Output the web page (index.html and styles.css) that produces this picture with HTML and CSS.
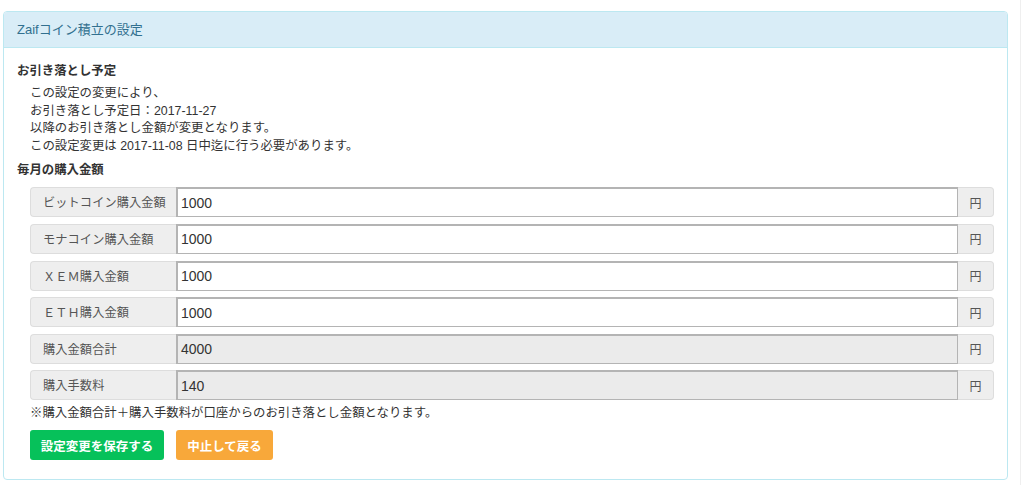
FILE: index.html
```html
<!DOCTYPE html>
<html lang="ja">
<head>
<meta charset="utf-8">
<title>Zaifコイン積立の設定</title>
<link rel="stylesheet" href="styles.css">
</head>
<body>
<div class="panel">
  <div class="panel-heading">Zaifコイン積立の設定</div>
  <div class="panel-body">
    <div class="sec-title">お引き落とし予定</div>
    <div class="notice">
      <div>この設定の変更により、</div>
      <div>お引き落とし予定日：2017-11-27</div>
      <div>以降のお引き落とし金額が変更となります。</div>
      <div>この設定変更は 2017-11-08 日中迄に行う必要があります。</div>
    </div>
    <div class="sec-title sec-title2">毎月の購入金額</div>
    <div class="form-area">
      <div class="rows">
        <div class="igroup"><div class="ilabel">ビットコイン購入金額</div><div class="iinput">1000</div><div class="iaddon">円</div></div>
        <div class="igroup"><div class="ilabel">モナコイン購入金額</div><div class="iinput">1000</div><div class="iaddon">円</div></div>
        <div class="igroup"><div class="ilabel">ＸＥＭ購入金額</div><div class="iinput">1000</div><div class="iaddon">円</div></div>
        <div class="igroup"><div class="ilabel">ＥＴＨ購入金額</div><div class="iinput">1000</div><div class="iaddon">円</div></div>
        <div class="igroup"><div class="ilabel">購入金額合計</div><div class="iinput disabled">4000</div><div class="iaddon">円</div></div>
        <div class="igroup"><div class="ilabel">購入手数料</div><div class="iinput disabled">140</div><div class="iaddon">円</div></div>
      </div>
      <div class="note">※購入金額合計＋購入手数料が口座からのお引き落とし金額となります。</div>
      <div class="buttons">
        <button class="btn btn-save">設定変更を保存する</button>
        <button class="btn btn-cancel">中止して戻る</button>
      </div>
    </div>
  </div>
</div>
</body>
</html>
```
FILE: styles.css
```css
html, body {
  margin: 0;
  padding: 0;
  background: #fff;
}
body {
  font-family: "Liberation Sans", "Noto Sans CJK JP", sans-serif;
  font-size: 12.4px;
  color: #333;
  padding-top: 11px;
  padding-left: 3px;
}
body::after {
  content: "";
  position: fixed;
  top: 0;
  bottom: 0;
  left: 1020px;
  width: 1px;
  background: #efefef;
}
.panel {
  width: 1005px;
  box-sizing: border-box;
  border: 1px solid #bce8f1;
  border-radius: 4px;
  background: #fff;
}
.panel-heading {
  height: 36px;
  box-sizing: border-box;
  line-height: 35px;
  padding-left: 13px;
  background: #d9edf7;
  border-bottom: 1px solid #bce8f1;
  border-radius: 3px 3px 0 0;
  color: #31708f;
  font-size: 13px;
}
.panel-body {
  padding: 14px 13px 19px 13px;
}
.sec-title {
  font-weight: bold;
  line-height: 18px;
  color: #333;
}
.notice {
  margin-top: 5px;
  padding-left: 13px;
  line-height: 17.6px;
}
.sec-title2 {
  margin-top: 6px;
}
.form-area {
  margin-left: 13px;
}
.rows {
  margin-top: 8px;
  display: flex;
  flex-direction: column;
  gap: 6.6px;
}
.igroup {
  display: flex;
  height: 30px;
}
.ilabel {
  width: 146px;
  box-sizing: border-box;
  background: #eee;
  border: 1px solid #ddd;
  border-right: none;
  border-radius: 4px 0 0 4px;
  padding-left: 12px;
  display: flex;
  align-items: center;
  color: #555;
  font-size: 12.2px;
  letter-spacing: 0.1px;
  white-space: nowrap;
}
.iinput {
  flex: 1;
  box-sizing: border-box;
  border: 1px solid #b4b4b4;
  border-top-width: 2px;
  border-left-width: 2px;
  background: #fff;
  padding-left: 3px;
  display: flex;
  align-items: center;
  font-size: 14px;
  color: #333;
}
.iinput.disabled {
  background: #ebebeb;
}
.iaddon {
  width: 36px;
  box-sizing: border-box;
  background: #eee;
  border: 1px solid #ddd;
  border-left: none;
  border-radius: 0 4px 4px 0;
  display: flex;
  align-items: center;
  justify-content: center;
  color: #555;
  font-size: 12px;
}
.note {
  margin-top: 4px;
  line-height: 18px;
}
.buttons {
  margin-top: 8px;
  display: flex;
  gap: 12px;
}
.btn {
  height: 30px;
  border: none;
  border-radius: 3px;
  color: #fff;
  font-family: "Liberation Sans", "Noto Sans CJK JP", sans-serif;
  font-size: 12.5px;
  font-weight: bold;
  padding: 0;
  cursor: pointer;
}
.btn-save {
  width: 134px;
  background: #06c15a;
}
.btn-cancel {
  width: 97px;
  background: #f8a83a;
}
```
